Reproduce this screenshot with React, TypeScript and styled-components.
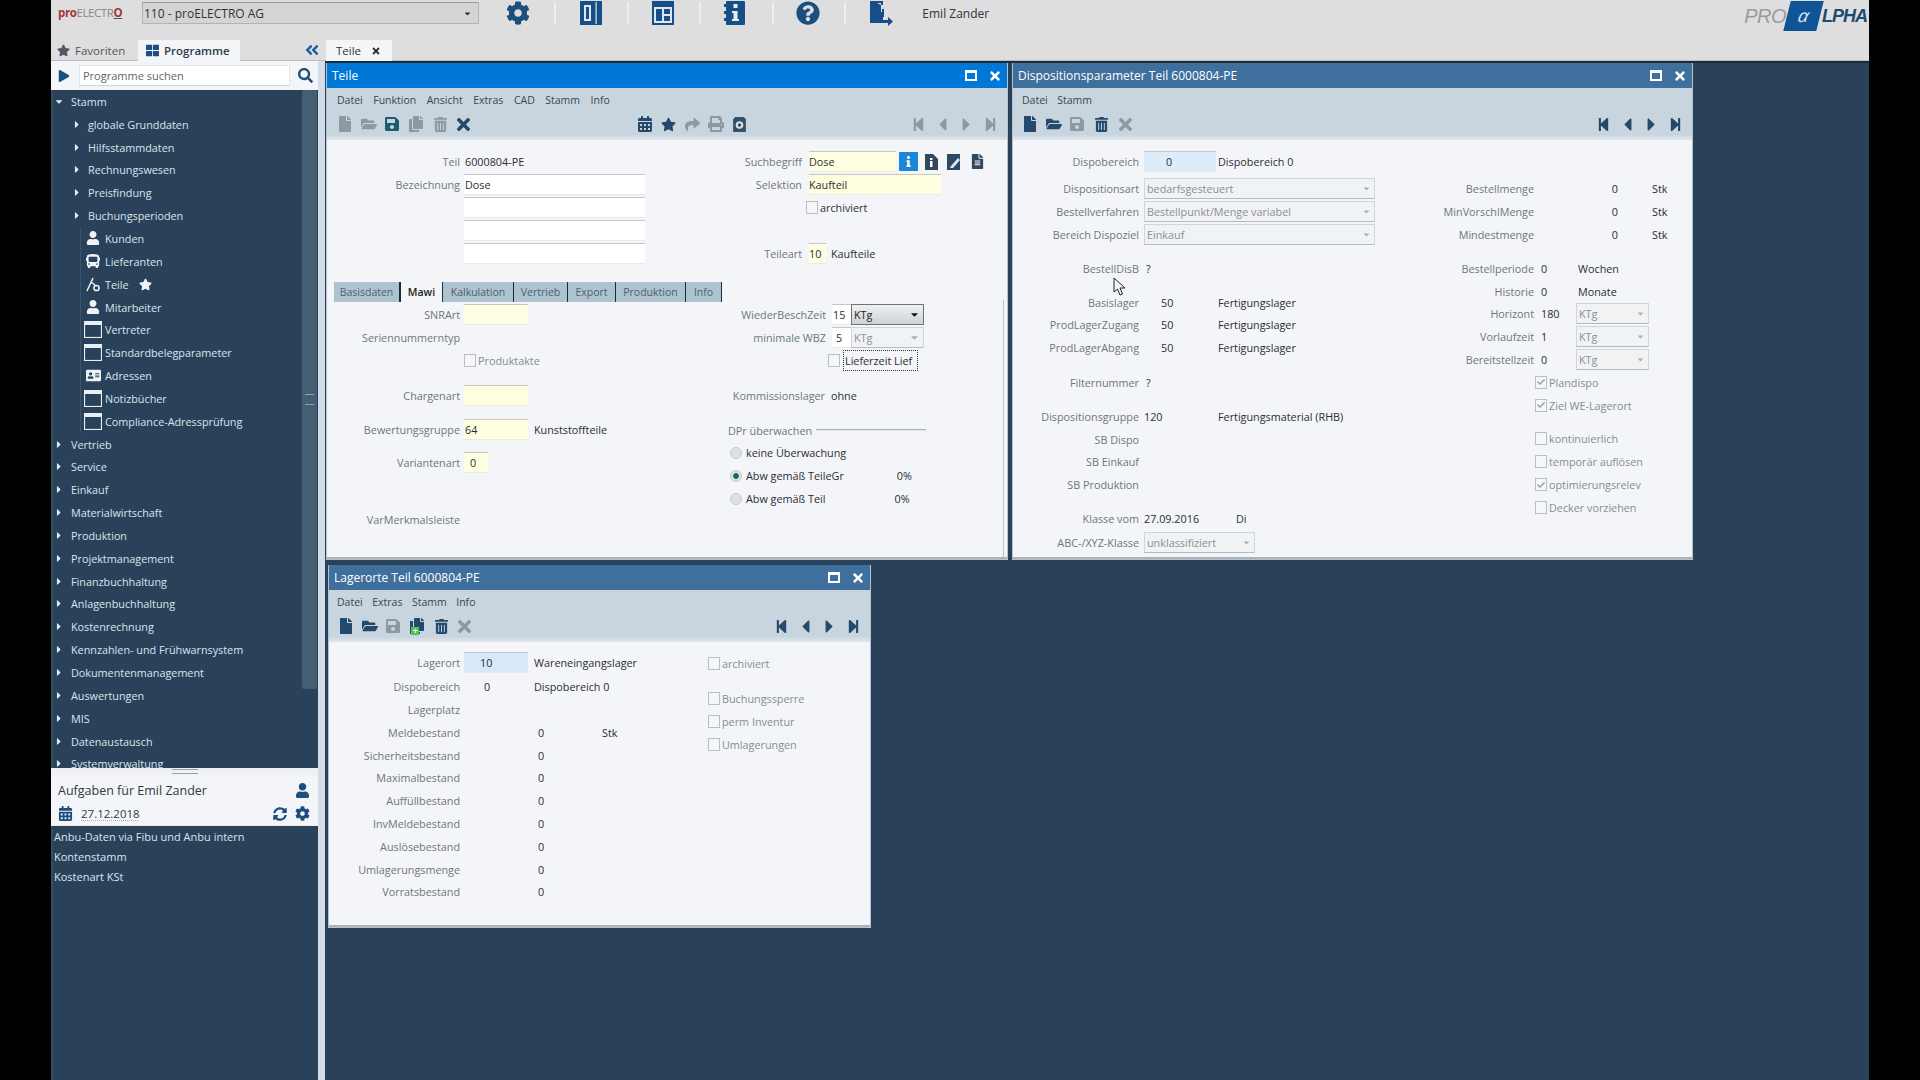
import React from 'react';
import styled, { createGlobalStyle } from 'styled-components';
import {
  FaCog, FaQuestionCircle, FaUser, FaStar, FaSearch, FaCaretRight, FaCaretLeft, FaCaretDown,
  FaAngleDoubleLeft, FaTimes, FaFile, FaFolderOpen, FaSave, FaCopy, FaTrashAlt, FaCalendarAlt,
  FaShare, FaPrint, FaStepBackward, FaStepForward, FaPlay, FaBus, FaAddressCard, FaSyncAlt,
  FaFileAlt, FaInfo, FaCheck, FaThLarge,
} from 'react-icons/fa';

const Global = createGlobalStyle`
  html, body { margin: 0; padding: 0; background: #000; }
  body { font-family: "Open Sans", "Noto Sans", "Liberation Sans", sans-serif; font-size: 11px; overflow: hidden; }
  * { box-sizing: border-box; }
`;

const Shell = styled.div`
  width: 1818px; height: 1080px; margin: 0 auto; display: flex; flex-direction: column;
  background: #29425a; overflow: hidden;
`;
const TopBar = styled.header`
  height: 61px; flex: none; background: #dedede; display: flex; flex-direction: column;
  border-bottom: 1px solid #bcbcbc;
`;
const TopRow = styled.div`
  height: 40px; flex: none; display: flex; align-items: flex-start; padding: 2px 0 0 7px; position: relative;
`;
const BrandSmall = styled.div`
  width: 84px; height: 21px; flex: none; display: flex; align-items: center; font-size: 11.5px; letter-spacing: -0.4px; color: #888;
  b { color: #a8323c; font-weight: 700; }
  u { color: #a8323c; font-weight: 700; text-decoration-color: #555; }
`;
const TopCombo = styled.div`
  width: 337px; height: 22px; flex: none; display: flex; align-items: center; justify-content: space-between;
  background: #d4d4d4; border: 1px solid #b2b2b2; border-top-color: #9a9a9a; padding: 0 6px 0 1px;
  font-size: 12px; color: #333;
`;
const ToolStrip = styled.div`
  display: flex; align-items: center; height: 22px; margin-left: 5px; flex: none;
`;
const ToolCell = styled.div`
  width: 72.4px; height: 22px; flex: none; display: flex; align-items: center; justify-content: center; color: #1c4f80;
  border-right: 2px solid #eeeeee; padding-right: 2px;
  &:last-child { border-right: none; }
`;
const UserName = styled.div`
  font-size: 12px; color: #333; margin-left: 4px; flex: none; height: 22px; display: flex; align-items: center;
`;
const BrandBig = styled.div`
  margin-left: auto; margin-right: 2px; height: 28px; display: flex; align-items: center; font-size: 20px; font-style: italic; font-family: "Liberation Sans", sans-serif;
  color: #9b9b9b; letter-spacing: -0.5px;
  i { display: flex; align-items: center; justify-content: center; width: 33px; height: 30px; background: #0f5595; color: #cfe2f3; transform: skewX(-14deg); margin: 0 2px 0 1px; font-size: 18px; }
  span + i + span { color: #1d4a70; font-size: 18px; font-weight: 700; letter-spacing: -1px; }
`;
const TabRow = styled.div`
  height: 20px; flex: none; display: flex; align-items: stretch;
`;
const SideTabs = styled.div`
  width: 274px; flex: none; display: flex; align-items: stretch; padding-left: 6px; position: relative;
`;
const SideTab = styled.div<{ $active?: boolean }>`
  display: flex; align-items: center; gap: 5px; font-size: 11.5px; height: 21px;
  width: ${p => (p.$active ? 102 : 81)}px; padding-left: ${p => (p.$active ? 8 : 0)}px;
  background: ${p => (p.$active ? '#f3f5f8' : 'transparent')};
  color: ${p => (p.$active ? '#2c3c4d' : '#555')}; font-weight: ${p => (p.$active ? 600 : 400)};
  svg { color: ${p => (p.$active ? '#1c4f80' : '#556')}; }
`;
const Collapse = styled.div`
  position: absolute; left: 253px; top: 0; height: 20px; display: flex; align-items: center; color: #1c5f9f;
`;
const DocTab = styled.div`
  width: 66px; height: 21px; margin-left: 1px; display: flex; align-items: center; gap: 10px; padding-left: 10px;
  background: #f3f5f8; color: #333; font-size: 11.5px;
  svg { color: #222; }
`;

const Main = styled.div`
  flex: 1; display: flex; min-height: 0;
`;
const Sidebar = styled.aside`
  width: 274px; flex: none; display: flex; flex-direction: column; background: #29425a;
  border-right: 7px solid #d3dce9; border-left: 2px solid #384d63;
`;
const SearchRow = styled.div`
  height: 29px; flex: none; background: #f3f5f8; display: flex; align-items: center; padding-left: 7px; margin-left: -2px;
  color: #1c4f80;
`;
const SearchBox = styled.div`
  width: 211px; height: 21px; margin-left: 9px; background: #fff; border: 1px solid #e2e5e9; border-bottom-color: #cfd3d8;
  display: flex; align-items: center; padding-left: 3px; font-size: 11px; color: #666;
`;
const SearchGlass = styled.div`
  margin-left: 8px; display: flex; color: #1f4e78;
`;
const Tree = styled.nav`
  height: 678px; flex: none; position: relative; overflow: hidden;
`;
const ScrollTrack = styled.div`
  position: absolute; left: 249px; top: 0; width: 15px; height: 599px; background: #465e74; border-radius: 2px;
  &::after { content: ''; position: absolute; left: 3px; right: 3px; top: 304px; height: 9px;
    border-top: 1px solid #91a3b3; border-bottom: 1px solid #91a3b3; }
`;
const TreeRow = styled.div<{ $level: number }>`
  height: 22.85px; display: flex; align-items: center; color: #dbe4ec; font-size: 10.8px; white-space: nowrap; position: relative;
  padding-left: ${p => (p.$level === 0 ? 2 : 20)}px;
  gap: ${p => (p.$level === 0 ? 8 : 7)}px;
`;
const Caret = styled.span`
  width: 8px; flex: none; display: flex; justify-content: center; color: #e6edf3;
`;
const Leaves = styled.div`
  margin-left: 27px; border-left: 1px solid #3a546d;
`;
const Leaf = styled.div`
  height: 22.85px; display: flex; align-items: center; padding-left: 3px; gap: 3px; color: #dbe4ec; font-size: 10.8px; white-space: nowrap;
`;
const LeafIcon = styled.span`
  width: 18px; flex: none; display: flex; justify-content: center; color: #eef3f7;
`;
const Fav = styled.span`
  display: flex; margin-left: 7px; color: #eef3f7;
`;
const Grip = styled.div`
  height: 7px; flex: none; background: #eef0f3; margin-left: -2px; display: flex; justify-content: center; align-items: center;
  &::after { content: ''; width: 26px; height: 3px; border-top: 1px solid #9aa3ad; border-bottom: 1px solid #9aa3ad; }
`;
const TaskHead = styled.div`
  height: 51px; flex: none; background: #f3f5f8; margin-left: -2px; display: flex; flex-direction: column; padding: 4px 8px 0 7px;
  border-bottom: 1px solid #f7e9da;
`;
const TaskLine = styled.div`
  height: 23px; display: flex; align-items: center; color: #2f3a45; font-size: 12.5px;
`;
const TaskDate = styled.span`
  margin-left: 8px; font-size: 11.5px; text-decoration: underline dotted #aab; text-underline-offset: 2px;
`;
const TaskIcons = styled.span`
  margin-left: auto; display: flex; align-items: center; gap: 8px; color: #1c4f80;
`;
const Tasks = styled.div`
  flex: 1; padding-top: 0;
`;
const TaskItem = styled.div`
  height: 20px; display: flex; align-items: center; padding-left: 1px; color: #dbe4ec; font-size: 11px; white-space: nowrap;
`;

const Desktop = styled.main`
  flex: 1; position: relative; background: #29425a; border-top: 2px solid #1e2c3a; min-width: 0;
`;
const Win = styled.section<{ $x: number; $y: number; $w: number; $h: number }>`
  position: absolute; left: ${p => p.$x}px; top: ${p => p.$y}px; width: ${p => p.$w}px; height: ${p => p.$h}px;
  display: flex; flex-direction: column; background: #f3f5f8; border: 1px solid #b6c2cc; border-top: none;
`;
const Title = styled.div<{ $active?: boolean }>`
  height: 25px; flex: none; display: flex; align-items: center; padding: 0 5px 0 5px; font-size: 12px;
  color: #fff; background: ${p => (p.$active ? '#0078d7' : '#3f6f9c')};
`;
const TitleBtns = styled.div`
  margin-left: auto; display: flex; align-items: center; gap: 11px; color: #fff;
`;
const MaxBtn = styled.span`
  width: 12px; height: 11px; border: 2px solid #fff; border-top-width: 3px; display: block;
`;
const Menu = styled.div<{ $gap: number; $pl: number }>`
  height: 24px; flex: none; display: flex; align-items: center; gap: ${p => p.$gap}px; padding-left: ${p => p.$pl}px; background: #c8d5df; color: #3a4550; font-size: 10.5px;
`;
const ToolBar = styled.div`
  height: 28px; flex: none; display: flex; align-items: center; padding: 0 5px 4px 5px;
  background: linear-gradient(#c8d5df 80%, #dfe6ec);
`;
const IconGroup = styled.div<{ $ml?: number }>`
  display: flex; margin-left: ${p => (p.$ml === undefined ? 0 : p.$ml)}px;
`;
const NavGroup = styled.div`
  display: flex; margin-left: auto;
`;
const Tool = styled.span<{ $off?: boolean; $tone?: string }>`
  width: 23.8px; height: 18px; display: flex; align-items: center; justify-content: center; position: relative;
  color: ${p => p.$tone || (p.$off ? '#8c99a4' : '#234a6c')};
`;
const PlusBadge = styled.span`
  position: absolute; left: 6px; bottom: 0; width: 8px; height: 8px; background: #4fc24f; color: #fff; font-size: 9px; line-height: 8px; text-align: center; font-weight: 700;
`;

const Form = styled.div`
  flex: 1; display: flex; flex-direction: column; position: relative; min-height: 0; padding-top: 10.6px; border-bottom: 2px solid #a9b1b9;
`;
const Columns = styled.div`
  display: flex; align-items: flex-start;
`;
const Col = styled.div<{ $w: number }>`
  width: ${p => p.$w}px; flex: none; display: flex; flex-direction: column;
`;
const Row = styled.div<{ $mt?: number; $ml?: number }>`
  height: 22.8px; flex: none; display: flex; align-items: center; white-space: nowrap;
  margin-top: ${p => p.$mt || 0}px; margin-left: ${p => p.$ml || 0}px;
`;
const Label = styled.span<{ $w: number; $mr?: number }>`
  width: ${p => p.$w}px; margin-right: ${p => (p.$mr === undefined ? 5 : p.$mr)}px; flex: none; text-align: right; color: #6d767f; font-size: 10.8px;
`;
const Value = styled.span<{ $w?: number; $pl?: number; $ml?: number; $right?: boolean }>`
  ${p => (p.$w ? `width: ${p.$w}px; flex: none;` : '')}
  padding-left: ${p => p.$pl || 0}px; margin-left: ${p => p.$ml || 0}px; color: #2a2e33; font-size: 10.8px;
  text-align: ${p => (p.$right ? 'right' : 'left')};
`;
const Field = styled.span<{ $w: number; $bg?: string; $pl?: number; $ml?: number }>`
  width: ${p => p.$w}px; height: 21px; flex: none; display: flex; align-items: center; padding-left: ${p => (p.$pl === undefined ? 1 : p.$pl)}px;
  margin-left: ${p => p.$ml || 0}px; background: ${p => p.$bg || '#fff'}; border-top: 1px solid #c8c8c0; border-bottom: 1px solid #eceae2;
  color: #2a2e33; font-size: 10.8px;
`;
const Combo = styled.span<{ $w: number; $on?: boolean }>`
  width: ${p => p.$w}px; height: 21px; flex: none; display: flex; align-items: center; justify-content: space-between; padding: 0 3px 0 2px;
  font-size: 10.8px; color: ${p => (p.$on ? '#222' : '#8a9096')};
  background: ${p => (p.$on ? 'linear-gradient(#eef0f1, #cfd2d4)' : '#f1f2f4')};
  border: 1px solid ${p => (p.$on ? '#6f7377' : '#d0d5da')}; border-bottom-color: ${p => (p.$on ? '#6f7377' : '#b4bac0')};
  svg { color: ${p => (p.$on ? '#111' : '#a8aeb4')}; flex: none; }
`;
const CheckBox = styled.span`
  width: 12px; height: 13px; flex: none; display: flex; align-items: center; justify-content: center; border: 1px solid #b8bec4; background: #f5f6f8; color: #9aa2aa;
`;
const CheckText = styled.span<{ $dim?: boolean; $ml?: number }>`
  margin-left: ${p => (p.$ml === undefined ? 2 : p.$ml)}px; font-size: 10.8px; color: ${p => (p.$dim ? '#858d95' : '#2a2e33')};
`;
const FocusText = styled.span`
  margin-left: 3px; padding: 0 8px 0 1px; height: 21px; width: 75px; display: flex; align-items: center; border: 1px dotted #333; color: #2a2e33; font-size: 10.8px;
`;
const Radio = styled.span<{ $on?: boolean }>`
  width: 12px; height: 12px; border-radius: 50%; flex: none; border: 1px solid #c2c7cc; background: ${p => (p.$on ? 'radial-gradient(#0f6b6b 35%, #dfe4e8 45%)' : '#dde1e5')};
`;
const GroupHead = styled.div`
  display: flex; align-items: center; height: 22.8px; margin-top: 12px; margin-left: 61px; color: #6d767f; font-size: 10.8px; white-space: nowrap;
  &::after { content: ''; margin-left: 4px; width: 110px; border-top: 1px solid #a9b0b6; border-bottom: 1px solid #e4e7ea; }
`;
const FieldBtn = styled.span<{ $bg: string }>`
  width: 19px; height: 19px; flex: none; margin-left: 3px; display: flex; align-items: center; justify-content: center;
  background: ${p => p.$bg}; color: #fff; border-radius: 1px;
`;
const FieldBtnPlain = styled.span`
  width: 19px; flex: none; margin-left: 4px; display: flex; justify-content: center; color: #33475a;
`;
const Tabs = styled.div`
  display: flex; height: 20px; margin: 17.4px 0 1.6px 7px; flex: none;
`;
const Tab = styled.div<{ $w: number; $active?: boolean }>`
  width: ${p => p.$w}px; flex: none; display: flex; align-items: center; justify-content: center; font-size: 10.5px;
  color: ${p => (p.$active ? '#222' : '#4f5e6b')}; font-weight: ${p => (p.$active ? 600 : 400)};
  background: ${p => (p.$active ? '#f3f5f8' : '#aec3d2')};
  border-right: 1px solid #1d2c38;
  ${p => (p.$active ? 'border-left: 1px solid #1d2c38;' : '')}
`;
const FormScroll = styled.div`
  position: absolute; right: 3px; top: 160px; bottom: 0; width: 1px; background: #b9c2ca;
`;
const Pointer = styled.svg`
  position: absolute; left: 100px; top: 137px;
`;

const WinGlyph = () => (
  <svg width="18" height="17" viewBox="0 0 18 17"><rect x="0.5" y="0.5" width="17" height="16" fill="none" stroke="#e8eef3" strokeWidth="1.2" /><rect x="0.5" y="0.5" width="17" height="3.5" fill="#e8eef3" /></svg>
);
const PartGlyph = () => (
  <svg width="16" height="16" viewBox="0 0 16 16" fill="none" stroke="#eef3f7" strokeWidth="1.5"><path d="M2 15 8 2" /><path d="M6 6l4 3" /><circle cx="11.5" cy="12" r="2.6" /></svg>
);
const TopPanelIcon = () => (
  <svg width="24" height="26" viewBox="0 0 24 26"><rect x="1" y="1" width="22" height="24" fill="#164f87" /><rect x="5" y="5" width="7" height="16" fill="#dfe6ee" /><rect x="7" y="7" width="3" height="12" fill="#164f87" /><rect x="16.5" y="2" width="1.2" height="22" fill="#dfe6ee" /></svg>
);
const TopLayoutIcon = () => (
  <svg width="24" height="26" viewBox="0 0 24 26"><rect x="1" y="1" width="22" height="24" fill="#164f87" /><rect x="3" y="7" width="18" height="16" fill="#dfe6ee" /><rect x="5" y="9" width="6" height="12" fill="#164f87" /><rect x="13" y="9" width="6" height="5" fill="#164f87" /><rect x="13" y="16" width="6" height="5" fill="#164f87" /></svg>
);
const TopInfoIcon = () => (
  <svg width="22" height="26" viewBox="0 0 22 26"><rect x="2" y="1" width="19" height="24" rx="1" fill="#164f87" /><rect x="0" y="4" width="3" height="3" fill="#164f87" /><rect x="0" y="11" width="3" height="3" fill="#164f87" /><rect x="0" y="18" width="3" height="3" fill="#164f87" /><rect x="9.5" y="4" width="4" height="4" fill="#e8eef3" /><path d="M8 11h5.5v8H15v2H8v-2h1.5v-6H8z" fill="#e8eef3" /></svg>
);
const TopExitIcon = () => (
  <svg width="26" height="27" viewBox="0 0 26 27"><path d="M2 1h13v4h-2V3H9l4 2v18H2z" fill="#164f87" /><path d="M15 9v7h-2" stroke="#164f87" strokeWidth="2" fill="none" /><path d="M15 12v8h5v-3l5 4.5-5 4.5v-3h-7V12z" fill="#164f87" /></svg>
);
const SnapIcon = () => (
  <svg width="17" height="17" viewBox="0 0 16 16"><path d="M2 3l2-2h8l2 2v12H2z" fill="#33506b" /><circle cx="8" cy="8.5" r="3.6" fill="#d7e0e6" /><circle cx="8" cy="8.5" r="1.6" fill="#33506b" /></svg>
);
const DocInfoIcon = () => (
  <svg width="13" height="16" viewBox="0 0 13 16"><path d="M0 0h8l5 5v11H0z" fill="#33475a" /><rect x="5" y="4" width="2.5" height="2" fill="#fff" /><rect x="5" y="7" width="2.5" height="6" fill="#fff" /></svg>
);
const DocEditIcon = () => (
  <svg width="15" height="16" viewBox="0 0 15 16"><path d="M0 0h13v16H0z" fill="#2c4a68" /><path d="M4 12l7-8 2 2-7 8H3z" fill="#dfe7ee" /></svg>
);

const level1 = ['globale Grunddaten', 'Hilfsstammdaten', 'Rechnungswesen', 'Preisfindung', 'Buchungsperioden'];
const leaves: { t: string; i: React.ReactNode; fav?: boolean }[] = [
  { t: 'Kunden', i: <FaUser size={14} /> },
  { t: 'Lieferanten', i: <FaBus size={14} /> },
  { t: 'Teile', i: <PartGlyph />, fav: true },
  { t: 'Mitarbeiter', i: <FaUser size={14} /> },
  { t: 'Vertreter', i: <WinGlyph /> },
  { t: 'Standardbelegparameter', i: <WinGlyph /> },
  { t: 'Adressen', i: <FaAddressCard size={15} /> },
  { t: 'Notizbücher', i: <WinGlyph /> },
  { t: 'Compliance-Adressprüfung', i: <WinGlyph /> },
];
const level0 = ['Vertrieb', 'Service', 'Einkauf', 'Materialwirtschaft', 'Produktion', 'Projektmanagement', 'Finanzbuchhaltung', 'Anlagenbuchhaltung', 'Kostenrechnung', 'Kennzahlen- und Frühwarnsystem', 'Dokumentenmanagement', 'Auswertungen', 'MIS', 'Datenaustausch', 'Systemverwaltung'];

const I = { file: <FaFile size={16} />, folder: <FaFolderOpen size={16} />, save: <FaSave size={16} />, copy: <FaCopy size={16} />, trash: <FaTrashAlt size={15} />, x: <FaTimes size={19} /> };

const Nav = ({ off }: { off?: boolean }) => (
  <NavGroup>
    <Tool $off={off}><FaStepBackward size={15} /></Tool>
    <Tool $off={off}><FaCaretLeft size={21} /></Tool>
    <Tool $off={off}><FaCaretRight size={21} /></Tool>
    <Tool $off={off}><FaStepForward size={15} /></Tool>
  </NavGroup>
);
const WinTitle = ({ text, active }: { text: string; active?: boolean }) => (
  <Title $active={active}>
    {text}
    <TitleBtns><MaxBtn /><FaTimes size={14} /></TitleBtns>
  </Title>
);
const Check = ({ on, text }: { on?: boolean; text: string }) => (
  <>
    <CheckBox>{on ? <FaCheck size={8} /> : null}</CheckBox>
    <CheckText $dim>{text}</CheckText>
  </>
);

const TeileWindow = () => (
  <Win $x={1} $y={0} $w={682} $h={497}>
    <WinTitle text="Teile" active />
    <Menu $gap={10.5} $pl={10}>
      {['Datei', 'Funktion', 'Ansicht', 'Extras', 'CAD', 'Stamm', 'Info'].map(m => <span key={m}>{m}</span>)}
    </Menu>
    <ToolBar>
      <IconGroup $ml={1}>
        <Tool $off>{I.file}</Tool><Tool $off>{I.folder}</Tool><Tool $tone="#1f5a6e">{I.save}</Tool>
        <Tool $off>{I.copy}</Tool><Tool $off>{I.trash}</Tool><Tool>{I.x}</Tool>
      </IconGroup>
      <IconGroup $ml={157}>
        <Tool><FaCalendarAlt size={16} /></Tool><Tool><FaStar size={15} /></Tool><Tool $off><FaShare size={15} /></Tool>
        <Tool $off><FaPrint size={16} /></Tool><Tool><SnapIcon /></Tool>
      </IconGroup>
      <Nav off />
    </ToolBar>
    <Form>
      <Columns>
        <Col $w={340}>
          <Row><Label $w={133} $mr={4}>Teil</Label><Value $pl={1}>6000804-PE</Value></Row>
          <Row><Label $w={133} $mr={4}>Bezeichnung</Label><Field $w={181}>Dose</Field></Row>
          <Row $ml={137}><Field $w={181} /></Row>
          <Row $ml={137}><Field $w={181} /></Row>
          <Row $ml={137}><Field $w={181} /></Row>
        </Col>
        <Col $w={340}>
          <Row>
            <Label $w={135} $mr={7}>Suchbegriff</Label><Field $w={87} $bg="#fefee0" $pl={0}>Dose</Field>
            <FieldBtn $bg="#1d86d8"><FaInfo size={11} /></FieldBtn>
            <FieldBtnPlain><DocInfoIcon /></FieldBtnPlain>
            <FieldBtnPlain><DocEditIcon /></FieldBtnPlain>
            <FieldBtnPlain><FaFileAlt size={15} /></FieldBtnPlain>
          </Row>
          <Row><Label $w={135} $mr={7}>Selektion</Label><Field $w={132} $bg="#fefee0" $pl={0}>Kaufteil</Field></Row>
          <Row $ml={139}><CheckBox /><CheckText $ml={2}>archiviert</CheckText></Row>
          <Row />
          <Row><Label $w={135} $mr={7}>Teileart</Label><Field $w={17} $bg="#fefee0" $pl={0}>10</Field><Value $ml={5}>Kaufteile</Value></Row>
        </Col>
      </Columns>
      <Tabs>
        <Tab $w={66}>Basisdaten</Tab>
        <Tab $w={43} $active>Mawi</Tab>
        <Tab $w={71}>Kalkulation</Tab>
        <Tab $w={54}>Vertrieb</Tab>
        <Tab $w={48}>Export</Tab>
        <Tab $w={70}>Produktion</Tab>
        <Tab $w={36}>Info</Tab>
      </Tabs>
      <Columns>
        <Col $w={340}>
          <Row><Label $w={133} $mr={4}>SNRArt</Label><Field $w={64} $bg="#fefee0" /></Row>
          <Row><Label $w={133} $mr={4}>Seriennummerntyp</Label></Row>
          <Row $ml={137}><CheckBox /><CheckText $dim>Produktakte</CheckText></Row>
          <Row $mt={12}><Label $w={133} $mr={4}>Chargenart</Label><Field $w={64} $bg="#fefee0" /></Row>
          <Row $mt={11}><Label $w={133} $mr={4}>Bewertungsgruppe</Label><Field $w={64} $bg="#fefee0">64</Field><Value $ml={6}>Kunststoffteile</Value></Row>
          <Row $mt={11}><Label $w={133} $mr={4}>Variantenart</Label><Field $w={24} $bg="#fefee0" $pl={6}>0</Field></Row>
          <Row $mt={34}><Label $w={133} $mr={4}>VarMerkmalsleiste</Label></Row>
        </Col>
        <Col $w={340}>
          <Row><Label $w={159} $mr={6}>WiederBeschZeit</Label><Field $w={19} $pl={1}>15</Field><Combo $w={73} $on>KTg<FaCaretDown size={11} /></Combo></Row>
          <Row><Label $w={159} $mr={6}>minimale WBZ</Label><Field $w={19} $pl={4}>5</Field><Combo $w={73}>KTg<FaCaretDown size={11} /></Combo></Row>
          <Row $ml={161}><CheckBox /><FocusText>Lieferzeit Lief</FocusText></Row>
          <Row $mt={12}><Label $w={158} $mr={6}>Kommissionslager</Label><Value>ohne</Value></Row>
          <GroupHead>DPr überwachen</GroupHead>
          <Row $ml={63}><Radio /><CheckText $ml={4}>keine Überwachung</CheckText></Row>
          <Row $ml={63}><Radio $on /><CheckText $ml={4}>Abw gemäß TeileGr</CheckText><Value $ml={53}>0%</Value></Row>
          <Row $ml={63}><Radio /><CheckText $ml={4}>Abw gemäß Teil</CheckText><Value $ml={69}>0%</Value></Row>
        </Col>
      </Columns>
      <FormScroll />
    </Form>
  </Win>
);

const DispoWindow = () => (
  <Win $x={687} $y={0} $w={681} $h={497}>
    <WinTitle text="Dispositionsparameter  Teil 6000804-PE" />
    <Menu $gap={9.5} $pl={9}><span>Datei</span><span>Stamm</span></Menu>
    <ToolBar>
      <IconGroup>
        <Tool>{I.file}</Tool><Tool>{I.folder}</Tool><Tool $off>{I.save}</Tool><Tool>{I.trash}</Tool><Tool $off>{I.x}</Tool>
      </IconGroup>
      <Nav />
    </ToolBar>
    <Form>
      <Columns>
        <Col $w={400}>
          <Row><Label $w={126}>Dispobereich</Label><Field $w={72} $bg="#dcecfb" $pl={22}>0</Field><Value $ml={2}>Dispobereich 0</Value></Row>
          <Row $mt={4.2}><Label $w={126}>Dispositionsart</Label><Combo $w={231}>bedarfsgesteuert<FaCaretDown size={9} /></Combo></Row>
          <Row><Label $w={126}>Bestellverfahren</Label><Combo $w={231}>Bestellpunkt/Menge variabel<FaCaretDown size={9} /></Combo></Row>
          <Row><Label $w={126}>Bereich Dispoziel</Label><Combo $w={231}>Einkauf<FaCaretDown size={9} /></Combo></Row>
          <Row $mt={11}><Label $w={126}>BestellDisB</Label><Value $pl={2}>?</Value></Row>
          <Row $mt={11}><Label $w={126}>Basislager</Label><Value $w={74} $pl={17}>50</Value><Value>Fertigungslager</Value></Row>
          <Row><Label $w={126}>ProdLagerZugang</Label><Value $w={74} $pl={17}>50</Value><Value>Fertigungslager</Value></Row>
          <Row><Label $w={126}>ProdLagerAbgang</Label><Value $w={74} $pl={17}>50</Value><Value>Fertigungslager</Value></Row>
          <Row $mt={12}><Label $w={126}>Filternummer</Label><Value $pl={2}>?</Value></Row>
          <Row $mt={11}><Label $w={126}>Dispositionsgruppe</Label><Value $w={74}>120</Value><Value>Fertigungsmaterial (RHB)</Value></Row>
          <Row><Label $w={126}>SB Dispo</Label></Row>
          <Row><Label $w={126}>SB Einkauf</Label></Row>
          <Row><Label $w={126}>SB Produktion</Label></Row>
          <Row $mt={11}><Label $w={126}>Klasse vom</Label><Value $w={92}>27.09.2016</Value><Value>Di</Value></Row>
          <Row $mt={1}><Label $w={126}>ABC-/XYZ-Klasse</Label><Combo $w={111}>unklassifiziert<FaCaretDown size={9} /></Combo></Row>
        </Col>
        <Col $w={280}>
          <Row $mt={27}><Label $w={121}>Bestellmenge</Label><Value $w={79} $right>0</Value><Value $ml={34}>Stk</Value></Row>
          <Row><Label $w={121}>MinVorschlMenge</Label><Value $w={79} $right>0</Value><Value $ml={34}>Stk</Value></Row>
          <Row><Label $w={121}>Mindestmenge</Label><Value $w={79} $right>0</Value><Value $ml={34}>Stk</Value></Row>
          <Row $mt={11}><Label $w={121}>Bestellperiode</Label><Value $w={37} $pl={2}>0</Value><Value $pl={2}>Wochen</Value></Row>
          <Row><Label $w={121}>Historie</Label><Value $w={37} $pl={2}>0</Value><Value $pl={2}>Monate</Value></Row>
          <Row><Label $w={121}>Horizont</Label><Value $w={37} $pl={2}>180</Value><Combo $w={73}>KTg<FaCaretDown size={9} /></Combo></Row>
          <Row><Label $w={121}>Vorlaufzeit</Label><Value $w={37} $pl={2}>1</Value><Combo $w={73}>KTg<FaCaretDown size={9} /></Combo></Row>
          <Row><Label $w={121}>Bereitstellzeit</Label><Value $w={37} $pl={2}>0</Value><Combo $w={73}>KTg<FaCaretDown size={9} /></Combo></Row>
          <Row $ml={122}><Check on text="Plandispo" /></Row>
          <Row $ml={122}><Check on text="Ziel WE-Lagerort" /></Row>
          <Row $ml={122} $mt={11}><Check text="kontinuierlich" /></Row>
          <Row $ml={122}><Check text="temporär auflösen" /></Row>
          <Row $ml={122}><Check on text="optimierungsrelev" /></Row>
          <Row $ml={122}><Check text="Decker vorziehen" /></Row>
        </Col>
      </Columns>
      <Pointer width="13" height="19" viewBox="0 0 13 19"><path d="M1 1v14l3.5-3 2.5 6 2.5-1-2.5-6H12z" fill="#f4f6f8" stroke="#222" strokeWidth="1" /></Pointer>
    </Form>
  </Win>
);

const stock = ['Meldebestand', 'Sicherheitsbestand', 'Maximalbestand', 'Auffüllbestand', 'InvMeldebestand', 'Auslösebestand', 'Umlagerungsmenge', 'Vorratsbestand'];

const LagerWindow = () => (
  <Win $x={3} $y={502} $w={543} $h={363}>
    <WinTitle text="Lagerorte Teil 6000804-PE" />
    <Menu $gap={9.5} $pl={8}>{['Datei', 'Extras', 'Stamm', 'Info'].map(m => <span key={m}>{m}</span>)}</Menu>
    <ToolBar>
      <IconGroup>
        <Tool>{I.file}</Tool><Tool>{I.folder}</Tool><Tool $off>{I.save}</Tool>
        <Tool>{I.copy}<PlusBadge>+</PlusBadge></Tool><Tool>{I.trash}</Tool><Tool $off>{I.x}</Tool>
      </IconGroup>
      <Nav />
    </ToolBar>
    <Form>
      <Columns>
        <Col $w={379}>
          <Row $mt={-1}><Label $w={131} $mr={4}>Lagerort</Label><Field $w={64} $bg="#d6e8fa" $pl={16}>10</Field><Value $ml={6}>Wareneingangslager</Value></Row>
          <Row $mt={1}><Label $w={131} $mr={4}>Dispobereich</Label><Value $w={70} $pl={20}>0</Value><Value>Dispobereich 0</Value></Row>
          <Row><Label $w={131} $mr={4}>Lagerplatz</Label></Row>
          {stock.map((s, i) => (
            <Row key={s}><Label $w={131} $mr={4}>{s}</Label><Value $w={138} $pl={74}>0</Value>{i === 0 ? <Value>Stk</Value> : null}</Row>
          ))}
        </Col>
        <Col $w={150}>
          <Row><Check text="archiviert" /></Row>
          <Row $mt={12}><Check text="Buchungssperre" /></Row>
          <Row><Check text="perm Inventur" /></Row>
          <Row><Check text="Umlagerungen" /></Row>
        </Col>
      </Columns>
    </Form>
  </Win>
);

export default function App() {
  return (
    <Shell>
      <Global />
      <TopBar>
        <TopRow>
          <BrandSmall><span><b>pro</b>ELECTR<u>O</u></span></BrandSmall>
          <TopCombo>110 - proELECTRO AG<FaCaretDown size={9} color="#333" /></TopCombo>
          <ToolStrip>
            <ToolCell><FaCog size={24} /></ToolCell>
            <ToolCell><TopPanelIcon /></ToolCell>
            <ToolCell><TopLayoutIcon /></ToolCell>
            <ToolCell><TopInfoIcon /></ToolCell>
            <ToolCell><FaQuestionCircle size={24} /></ToolCell>
            <ToolCell><TopExitIcon /></ToolCell>
          </ToolStrip>
          <UserName>Emil Zander</UserName>
          <BrandBig><span>PRO</span><i>α</i><span>LPHA</span></BrandBig>
        </TopRow>
        <TabRow>
          <SideTabs>
            <SideTab><FaStar size={13} />Favoriten</SideTab>
            <SideTab $active><FaThLarge size={13} />Programme</SideTab>
            <Collapse><FaAngleDoubleLeft size={16} /></Collapse>
          </SideTabs>
          <DocTab>Teile<FaTimes size={10} /></DocTab>
        </TabRow>
      </TopBar>
      <Main>
        <Sidebar>
          <SearchRow>
            <FaPlay size={12} />
            <SearchBox>Programme suchen</SearchBox>
            <SearchGlass><FaSearch size={15} /></SearchGlass>
          </SearchRow>
          <Tree>
            <ScrollTrack />
            <TreeRow $level={0}><Caret><FaCaretDown size={11} /></Caret>Stamm</TreeRow>
            {level1.map(t => (
              <TreeRow key={t} $level={1}><Caret><FaCaretRight size={11} /></Caret>{t}</TreeRow>
            ))}
            <Leaves>
              {leaves.map(l => (
                <Leaf key={l.t}>
                  <LeafIcon>{l.i}</LeafIcon>{l.t}
                  {l.fav ? <Fav><FaStar size={13} /></Fav> : null}
                </Leaf>
              ))}
            </Leaves>
            {level0.map(t => (
              <TreeRow key={t} $level={0}><Caret><FaCaretRight size={11} /></Caret>{t}</TreeRow>
            ))}
          </Tree>
          <Grip />
          <TaskHead>
            <TaskLine>Aufgaben für Emil Zander<TaskIcons><FaUser size={15} /></TaskIcons></TaskLine>
            <TaskLine>
              <FaCalendarAlt size={15} color="#1c4f80" />
              <TaskDate>27.12.2018</TaskDate>
              <TaskIcons><FaSyncAlt size={14} /><FaCog size={15} /></TaskIcons>
            </TaskLine>
          </TaskHead>
          <Tasks>
            <TaskItem>Anbu-Daten via Fibu und Anbu intern</TaskItem>
            <TaskItem>Kontenstamm</TaskItem>
            <TaskItem>Kostenart KSt</TaskItem>
          </Tasks>
        </Sidebar>
        <Desktop>
          <TeileWindow />
          <DispoWindow />
          <LagerWindow />
        </Desktop>
      </Main>
    </Shell>
  );
}
